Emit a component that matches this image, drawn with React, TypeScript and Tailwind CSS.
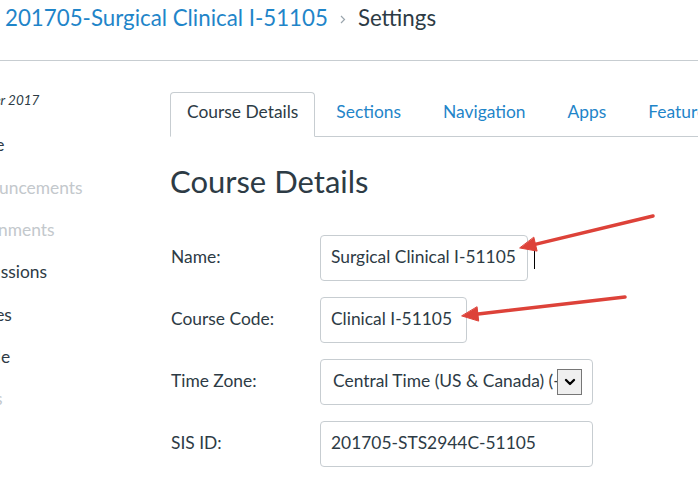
import { ChevronDown } from "lucide-react";

const sideItems = [
  { label: "Home", dim: false },
  { label: "Announcements", dim: true },
  { label: "Assignments", dim: true },
  { label: "Discussions", dim: false },
  { label: "Grades", dim: false },
  { label: "People", dim: false },
  { label: "Pages", dim: true },
];

const tabs = ["Sections", "Navigation", "Apps", "Features"];

function TextField({ value, width }: { value: string; width: string }) {
  return (
    <div
      className={`${width} h-[46px] shrink-0 flex items-center pb-[2px] px-[10px] border border-[#c7cdd1] rounded-[4px] text-[17.4px] text-[#2d3b45] whitespace-nowrap overflow-hidden`}
    >
      {value}
    </div>
  );
}

function Row({ label, children }: { label: string; children: React.ReactNode }) {
  return (
    <div className="flex items-center">
      <div className="w-[150px] shrink-0 pl-px pb-[2px] text-[17.4px] text-[#2d3b45]">{label}</div>
      {children}
    </div>
  );
}

export default function App() {
  return (
    <div className="relative w-[698px] h-[480px] overflow-hidden bg-white font-['Lato',sans-serif] text-[#2d3b45]">
      {/* breadcrumb */}
      <div className="h-[61px] border-b border-[#c7cdd1] flex items-start pt-[5px] pl-[5px] text-[22.3px] leading-[26px]">
        <span className="text-[#1f85c9]">201705-Surgical Clinical I-51105</span>
        <svg className="ml-[12px] mr-[12px] mt-[10px]" width="6" height="9" viewBox="0 0 6 9">
          <path d="M1 1l3.5 3.5L1 8" fill="none" stroke="#9aa5ad" strokeWidth="1.2" />
        </svg>
        <span className="text-[#2d3b45]">Settings</span>
      </div>

      <div className="flex">
        {/* course nav */}
        <div className="w-[170px] shrink-0 overflow-hidden">
          <div className="ml-[-42px] pt-[18px] whitespace-nowrap">
            <div className="h-[42px] mb-[3px] flex items-center pl-[1px] text-[13.5px] italic text-[#2d3b45]">
              Summer 2017
            </div>
            {sideItems.map((item) => (
              <div
                key={item.label}
                className={`h-[42.4px] flex items-center text-[17.4px] ${
                  item.dim ? "text-[#c3c8cc]" : "text-[#2d3b45]"
                }`}
              >
                {item.label}
              </div>
            ))}
          </div>
        </div>

        {/* main */}
        <div className="flex-1 min-w-0 pt-[31px]">
          <div className="flex overflow-hidden text-[17.4px] whitespace-nowrap">
            <div className="h-[45px] shrink-0 flex items-center pb-[4px] px-[16px] border border-[#c7cdd1] border-b-white rounded-t-[4px] text-[#2d3b45]">
              Course Details
            </div>
            {tabs.map((t) => (
              <div
                key={t}
                className="h-[45px] shrink-0 flex items-center pb-[4px] px-[21px] border-b border-[#c7cdd1] text-[#1f85c9]"
              >
                {t}
              </div>
            ))}
          </div>

          <h1 className="mt-[26px] text-[31px] leading-[36px] text-[#2d3b45]">Course Details</h1>

          <div className="mt-[36px] flex flex-col gap-4">
            <Row label="Name:">
              <TextField value="Surgical Clinical I-51105" width="w-[208px]" />
              <div className="ml-[6px] w-px h-[22px] bg-black" />
            </Row>
            <Row label="Course Code:">
              <TextField value="Clinical I-51105" width="w-[147px]" />
            </Row>
            <Row label="Time Zone:">
              <div className="w-[273px] h-[46px] shrink-0 flex items-center pl-[12px] border border-[#c7cdd1] rounded-[4px]">
                <span className="w-[224px] pb-[2px] overflow-hidden whitespace-nowrap text-[17.4px] text-[#2d3b45]">
                  Central Time (US &amp; Canada) (-06:00)
                </span>
                <span className="w-[25px] h-[26px] flex items-center justify-center border border-[#767676] bg-[#efefef]">
                  <ChevronDown className="w-[16px] h-[16px] text-black" strokeWidth={3.5} />
                </span>
              </div>
            </Row>
            <Row label="SIS ID:">
              <TextField value="201705-STS2944C-51105" width="w-[273px]" />
            </Row>
          </div>
        </div>
      </div>

      {/* annotation arrows */}
      <svg className="absolute inset-0 pointer-events-none" width="698" height="480" viewBox="0 0 698 480">
        <g fill="#dd4239" stroke="#dd4239" strokeLinecap="round">
          <line x1="653" y1="216" x2="534" y2="244.6" strokeWidth="3.5" />
          <polygon points="520,248 537.1,251.1 533.9,237.5" strokeWidth="1" strokeLinejoin="round" />
          <line x1="625" y1="297" x2="476" y2="314.3" strokeWidth="3.5" />
          <polygon points="462,316 478.7,321.1 477.1,307.1" strokeWidth="1" strokeLinejoin="round" />
        </g>
      </svg>
    </div>
  );
}
